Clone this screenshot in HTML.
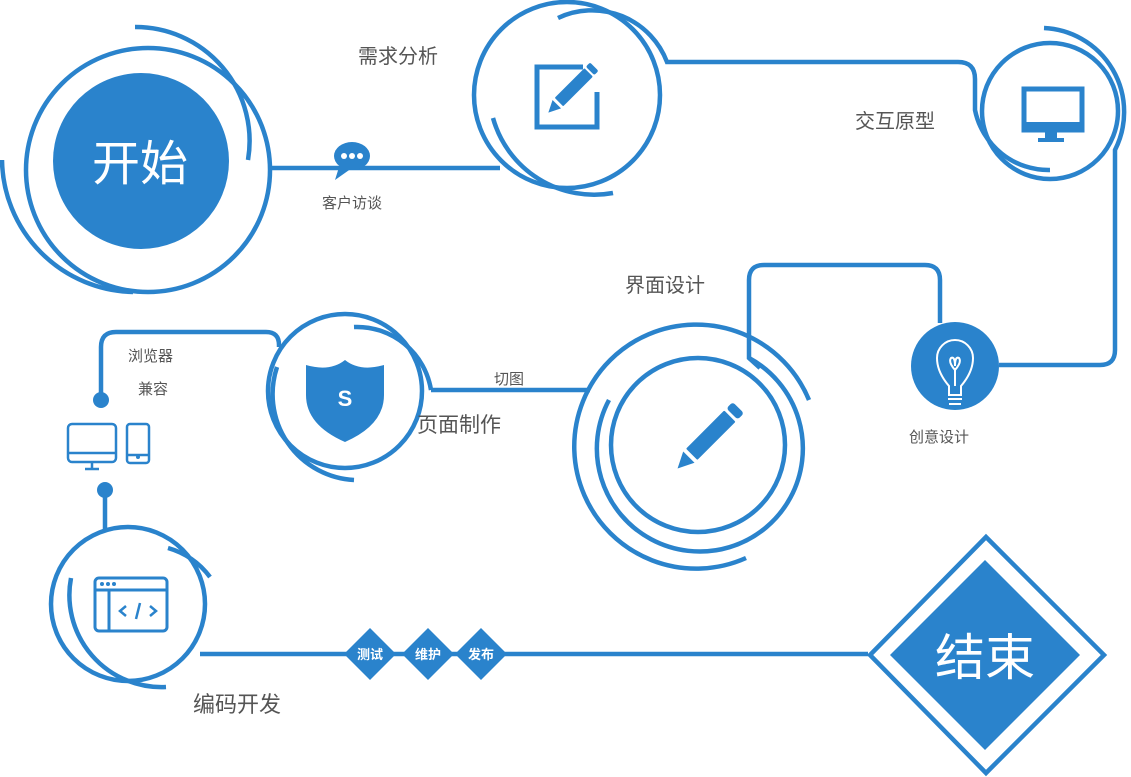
<!DOCTYPE html>
<html><head><meta charset="utf-8"><style>
html,body{margin:0;padding:0;background:#fff;}
svg{display:block;}
text{font-family:"Liberation Sans","Noto Sans CJK SC",sans-serif;}
</style></head><body>
<svg width="1131" height="777" viewBox="0 0 1131 777" xmlns="http://www.w3.org/2000/svg">
<g fill="none" stroke="#2a83cc" stroke-width="4.5">
<!-- start -->
<circle cx="148" cy="170" r="122"/>
<path d="M135,27 A114,114 0 0 1 248,160"/>
<path d="M2,160 A134,134 0 0 0 133,292"/>
<path d="M270,168 H500"/>
<!-- requirement -->
<circle cx="567" cy="95" r="93"/>
<path d="M558,18 A80,80 0 0 1 667,62 H958 Q975,62 975,79 V110 A75,75 0 0 0 1050,170"/>
<path d="M493,118 A105,105 0 0 0 613,193"/>
<!-- interaction -->
<circle cx="1050" cy="111" r="68"/>
<path d="M1044,28 A84,84 0 0 1 1115,150 V350 Q1115,365 1100,365 H999"/>
<!-- bulb line -->
<path d="M940,323 V280 Q940,265 925,265 H764 Q749,265 749,280 V358 L760,368"/>
<!-- interface -->
<circle cx="698" cy="445" r="87"/>
<path d="M609,400 A103,103 0 1 0 749,358"/>
<path d="M809,400 A122,122 0 1 0 746,558"/>
<path d="M431,390 H590"/>
<!-- shield -->
<circle cx="345" cy="391" r="77"/>
<path d="M354,327 A75,75 0 0 1 431,390"/>
<path d="M277,367 A86,86 0 0 0 354,480"/>
<path d="M279,347 V345 Q279,332 266,332 H116 Q101,332 101,347 V400"/>
<path d="M105,490 V530"/>
<!-- code -->
<circle cx="128" cy="604" r="77"/>
<path d="M168,548 A80,80 0 0 1 210,577"/>
<path d="M71,578 A92,92 0 0 0 166,687"/>
<path d="M200,654 H868"/>
<!-- end -->
<polygon points="986,537 1104,655 986,773 870,655"/>
</g>
<!-- fills -->
<g fill="#2a83cc">
<circle cx="141" cy="161" r="88"/>
<polygon points="985,560 1080,655 985,750 890,655"/>
<circle cx="955" cy="366" r="44"/>
<circle cx="101" cy="400" r="8"/>
<circle cx="105" cy="490" r="8"/>
<polygon points="370,628 396,654 370,680 344,654"/>
<polygon points="428,628 454,654 428,680 402,654"/>
<polygon points="481,628 507,654 481,680 455,654"/>
<!-- chat bubble -->
<ellipse cx="352" cy="156" rx="18" ry="14"/>
<path d="M340,164 L335,180 L352,168 Z"/>
<!-- shield -->
<path d="M306,365 Q330,372 345,360 Q360,372 384,365 V395 Q384,425 345,442 Q306,425 306,395 Z"/>
<!-- pencils -->
<g transform="translate(566,95) rotate(45)">
<rect x="-6" y="-32" width="12" height="42" rx="1"/>
<rect x="-6" y="-40" width="12" height="6" rx="2"/>
<path d="M-6,13 L6,13 L0,25 Z"/>
</g>
<g transform="translate(703,443) rotate(45)">
<rect x="-8" y="-38" width="16" height="54" rx="1"/>
<rect x="-8" y="-50" width="16" height="9" rx="3"/>
<path d="M-8,20 L8,20 L0,36 Z"/>
</g>
<!-- monitor stand -->
<rect x="1045" y="132" width="12" height="7"/>
<rect x="1038" y="138" width="26" height="4"/>
</g>
<g fill="none" stroke="#2a83cc">
<path d="M583,67 H537 V127 H597 V92" stroke-width="5"/>
<rect x="1024" y="89" width="58" height="41" stroke-width="5"/>
<rect x="1022" y="122" width="62" height="10" fill="#2a83cc" stroke="none"/>
<!-- devices -->
<rect x="68" y="424" width="48" height="38" rx="4" stroke-width="2.5"/>
<path d="M68,453 H116 M92,462 V468 M85,469 H99" stroke-width="2.5"/>
<rect x="127" y="424" width="22" height="39" rx="3" stroke-width="2.5"/>
<path d="M127,455 H149" stroke-width="2.5"/>
<!-- code icon -->
<rect x="95" y="578" width="72" height="53" rx="4" stroke-width="3"/>
<path d="M95,590 H167 M109,590 V631" stroke-width="3"/>
<path d="M126,606 L120,611 L126,616 M150,606 L156,611 L150,616 M140,603 L136,619" stroke-width="2.5"/>
<!-- bulb -->
<path d="M949,395 V386 Q937,372 937,358 A18,18 0 0 1 973,358 Q973,372 961,386 V395 Z M955,386 V368 M955,370 Q948,362 951,358 Q955,356 955,366 Q955,356 959,358 Q962,362 955,370 M948,399 H962 M949,404 H961" stroke="#fff" stroke-width="2"/>
</g>
<g fill="#2a83cc"><circle cx="102" cy="584" r="2"/><circle cx="108" cy="584" r="2"/><circle cx="114" cy="584" r="2"/><circle cx="138" cy="457" r="2"/></g>
<g fill="#fff"><circle cx="344" cy="156" r="3"/><circle cx="352" cy="156" r="3"/><circle cx="360" cy="156" r="3"/></g>
<!-- text -->
<g fill="#fff">
<text x="140" y="180" font-size="48" text-anchor="middle">开始</text>
<text x="985" y="675" font-size="50" text-anchor="middle">结束</text>
<text x="345" y="406" font-size="22" font-weight="bold" text-anchor="middle">S</text>
<text x="370" y="659" font-size="13" font-weight="bold" text-anchor="middle">测试</text>
<text x="428" y="659" font-size="13" font-weight="bold" text-anchor="middle">维护</text>
<text x="481" y="659" font-size="13" font-weight="bold" text-anchor="middle">发布</text>
</g>
<g fill="#555">
<text x="358" y="63" font-size="20">需求分析</text>
<text x="322" y="208" font-size="15">客户访谈</text>
<text x="855" y="128" font-size="20">交互原型</text>
<text x="625" y="292" font-size="20">界面设计</text>
<text x="909" y="442" font-size="15">创意设计</text>
<text x="494" y="384" font-size="15">切图</text>
<text x="417" y="432" font-size="21">页面制作</text>
<text x="128" y="361" font-size="15">浏览器</text>
<text x="138" y="394" font-size="15">兼容</text>
<text x="193" y="712" font-size="22">编码开发</text>
</g>
</svg>
</body></html>
